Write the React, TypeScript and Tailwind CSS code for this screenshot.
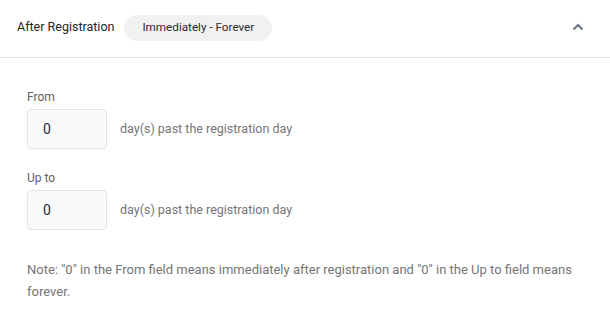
import React from "react";

function Field({ label, value }: { label: string; value: string }) {
  return (
    <div className="flex flex-col">
      <div className="text-[12px] leading-[16px] text-[#616161] mb-[4px]">{label}</div>
      <div className="flex items-center">
        <div className="w-[80px] h-[40px] rounded-[4px] border border-[#e3e3e3] bg-[#fafafa] flex items-center pl-[15px] text-[14px] text-[#1c2a3a]">
          {value}
        </div>
        <div className="ml-[13px] text-[12.5px] text-[#757575]">day(s) past the registration day</div>
      </div>
    </div>
  );
}

export default function App() {
  return (
    <div className="w-[610px] h-[319px] bg-white" style={{ fontFamily: "Roboto, 'Noto Sans', sans-serif" }}>
      <div className="h-[58px] pb-[2px] border-b border-[#e6e6e6] flex items-center pl-[17px] pr-[26px]">
        <span className="text-[12.5px] text-[#262626]">After Registration</span>
        <span className="ml-[10px] h-[26px] px-[18px] rounded-full bg-[#f1f1f1] flex items-center text-[11.7px] text-[#2a2a2a]">
          Immediately - Forever
        </span>
        <div className="flex-1" />
        <svg width="12" height="8" viewBox="0 0 12 8" fill="none" className="mb-[2px]">
          <path d="M1.5 6.5 L6 2 L10.5 6.5" stroke="#6b7585" strokeWidth="2" />
        </svg>
      </div>
      <div className="pl-[27px] pr-[20px] pt-[31px] flex flex-col">
        <Field label="From" value="0" />
        <div className="h-[21px]" />
        <Field label="Up to" value="0" />
        <p className="mt-[29px] text-[13px] leading-[22px] text-[#757575]">
          Note: "0" in the From field means immediately after registration and "0" in the Up to field means forever.
        </p>
      </div>
    </div>
  );
}
